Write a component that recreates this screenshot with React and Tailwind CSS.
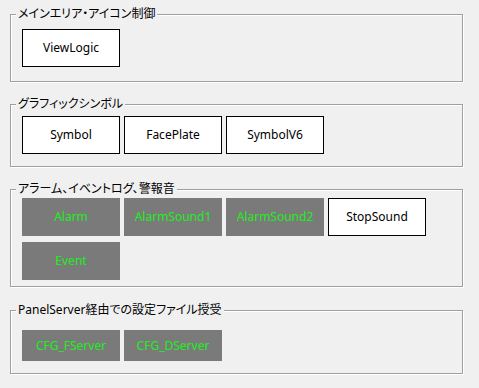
import React from 'react';

// Windows-style etched group box
const Group = ({ label, className = '', children }) => (
  <div
    className={`ml-[10px] w-[453px] border border-[#a0a0a0] shadow-[1px_1px_0_#ffffff,inset_1px_1px_0_#ffffff] ${className}`}
  >
    <div className="-mt-[9px] ml-[5px] w-fit bg-[#f0f0f0] px-[2px] text-[12px] leading-[16px] text-black [font-feature-settings:'palt']">
      {label}
    </div>
    {children}
  </div>
);

const Btn = ({ label, active = false, h = 'h-[38px]' }) => (
  <button
    className={`${h} w-[98px] text-[12px] ${
      active
        ? 'border border-black bg-white text-black'
        : 'border border-[#7a7a7a] bg-[#7a7a7a] text-[#1cf01c]'
    }`}
  >
    {label}
  </button>
);

export default function App() {
  return (
    <div className="h-[388px] w-[479px] overflow-hidden bg-[#f0f0f0] pt-[14px] font-['Noto_Sans','Noto_Sans_CJK_JP',sans-serif]">
      <Group label="メインエリア・アイコン制御" className="pb-[14px]">
        <div className="mt-[7px] flex gap-[4px] pl-[11px]">
          <Btn label="ViewLogic" active />
        </div>
      </Group>

      <Group label="グラフィックシンボル" className="mt-[22px] pb-[12px]">
        <div className="mt-[4px] flex gap-[4px] pl-[11px]">
          <Btn label="Symbol" active />
          <Btn label="FacePlate" active />
          <Btn label="SymbolV6" active />
        </div>
      </Group>

      <Group label="アラーム、イベントログ、警報音" className="mt-[22px] pb-[6px]">
        <div className="mt-[1px] grid w-fit grid-cols-[repeat(4,98px)] gap-x-[4px] gap-y-[6px] pl-[11px]">
          <Btn label="Alarm" />
          <Btn label="AlarmSound1" />
          <Btn label="AlarmSound2" />
          <Btn label="StopSound" active />
          <Btn label="Event" />
        </div>
      </Group>

      <Group label="PanelServer経由での設定ファイル授受" className="mt-[23px] pb-[12px]">
        <div className="mt-[12px] flex gap-[4px] pl-[11px]">
          <Btn label="CFG_FServer" h="h-[31px]" />
          <Btn label="CFG_DServer" h="h-[31px]" />
        </div>
      </Group>
    </div>
  );
}
